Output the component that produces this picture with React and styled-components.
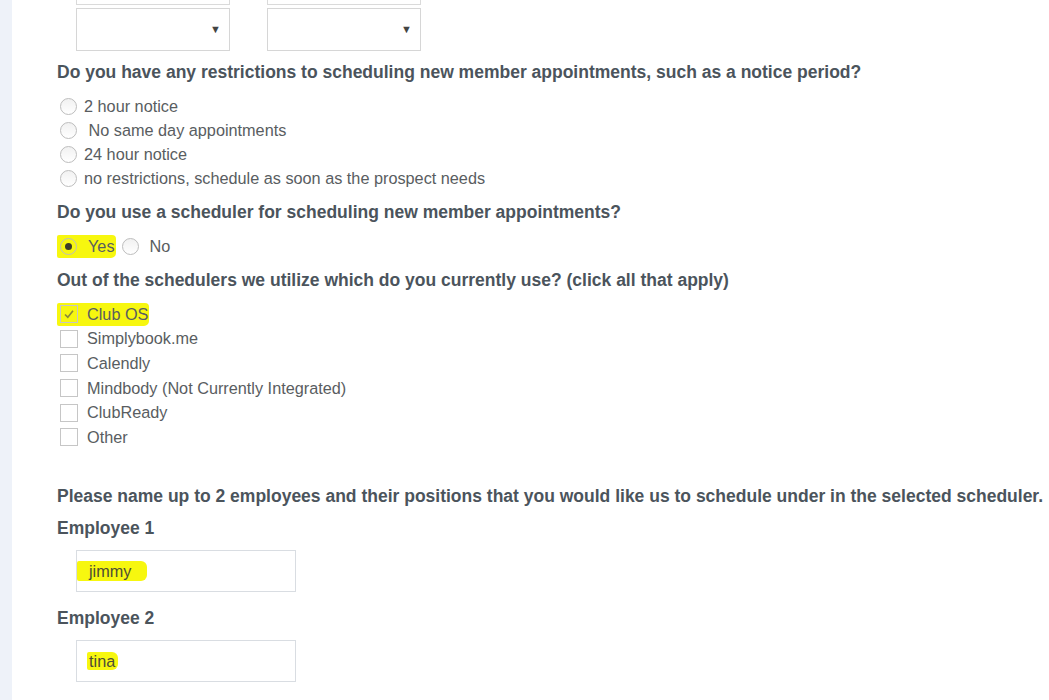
import React from "react";
import styled, { createGlobalStyle } from "styled-components";

const GlobalStyle = createGlobalStyle`
  html, body {
    margin: 0;
    padding: 0;
    background: #ffffff;
  }
  body {
    font-family: "Liberation Sans", Arial, sans-serif;
    overflow: hidden;
  }
`;

const restrictions = [
  "2 hour notice",
  "\u00a0No same day appointments",
  "24 hour notice",
  "no restrictions, schedule as soon as the prospect needs",
];

const schedulers = [
  { id: 1, name: "Club OS", checked: true },
  { id: 2, name: "Simplybook.me" },
  { id: 3, name: "Calendly" },
  { id: 4, name: "Mindbody (Not Currently Integrated)" },
  { id: 5, name: "ClubReady" },
  { id: 6, name: "Other" },
];

const employees = [
  { id: 1, label: "Employee 1", value: "jimmy", mark: "wide" },
  { id: 2, label: "Employee 2", value: "tina", mark: "tight" },
];

function Radio({ checked }) {
  return <RadioCircle checked={checked} />;
}

function CheckBox({ checked, flush }) {
  return (
    <Box flush={flush}>
      {checked && (
        <svg width="12" height="12" viewBox="0 0 12 12">
          <path d="M2 6.5 L4.8 9.2 L10 2.8" fill="none" stroke="#8a8a3a" strokeWidth="1.6" />
        </svg>
      )}
    </Box>
  );
}

export default function App() {
  return (
    <>
      <GlobalStyle />
      <Page>
        <SideStrip />
        <Content>
          <SelectRow cut>
            <PrevBox />
            <PrevBox />
          </SelectRow>
          <SelectRow>
            <Select>
              <Arrow>▼</Arrow>
            </Select>
            <Select>
              <Arrow>▼</Arrow>
            </Select>
          </SelectRow>

          <Question>
            Do you have any restrictions to scheduling new member appointments, such as a notice period?
          </Question>
          <OptionList>
            {restrictions.map((r) => (
              <RadioRow key={r}>
                <Radio />
                <OptionText>{r}</OptionText>
              </RadioRow>
            ))}
          </OptionList>

          <Question>Do you use a scheduler for scheduling new member appointments?</Question>
          <InlineRow>
            <Marker>
              <Radio checked />
              <OptionText gap={11}>Yes</OptionText>
            </Marker>
            <Radio />
            <OptionText gap={11}>No</OptionText>
          </InlineRow>

          <Question>Out of the schedulers we utilize which do you currently use? (click all that apply)</Question>
          <OptionList>
            {schedulers.map((s) =>
              s.checked ? (
                <CheckRow key={s.id}>
                  <Marker>
                    <CheckBox checked flush />
                    <OptionText gap={9}>{s.name}</OptionText>
                  </Marker>
                </CheckRow>
              ) : (
                <CheckRow key={s.id}>
                  <CheckBox />
                  <OptionText gap={9}>{s.name}</OptionText>
                </CheckRow>
              )
            )}
          </OptionList>

          <Question spaced>
            Please name up to 2 employees and their positions that you would like us to schedule under in the selected scheduler.
          </Question>
          {employees.map((e) => (
            <Field key={e.id}>
              <FieldLabel>{e.label}</FieldLabel>
              <TextBox>
                <InputMark variant={e.mark}>{e.value}</InputMark>
              </TextBox>
            </Field>
          ))}
        </Content>
      </Page>
    </>
  );
}

const Page = styled.div`
  display: flex;
  height: 700px;
  overflow: hidden;
`;

const SideStrip = styled.div`
  width: 12px;
  flex-shrink: 0;
  background: #eef2f9;
`;

const Content = styled.div`
  flex: 1;
  padding-left: 45px;
  display: flex;
  flex-direction: column;
  color: #555a5e;
`;

const SelectRow = styled.div`
  display: flex;
  gap: 37px;
  padding-left: 19px;
  margin-bottom: ${({ cut }) => (cut ? "3px" : "0")};
`;

const PrevBox = styled.div`
  width: 152px;
  height: 4px;
  border: 1px solid #dadada;
  border-top: none;
`;

const Select = styled.div`
  width: 154px;
  height: 43px;
  box-sizing: border-box;
  border: 1px solid #d6d6d6;
  display: flex;
  align-items: center;
  justify-content: flex-end;
  padding-right: 8px;
`;

const Arrow = styled.span`
  font-size: 11px;
  color: #444;
  line-height: 1;
`;

const Question = styled.h3`
  margin: ${({ spaced }) => (spaced ? "36px" : "12px")} 0 12px;
  font-size: 17.5px;
  line-height: 20px;
  font-weight: bold;
  color: #4b545c;
  white-space: nowrap;
  &:first-of-type {
    margin-top: 11px;
  }
`;

const FieldLabel = styled.div`
  font-size: 17.5px;
  line-height: 20px;
  font-weight: bold;
  color: #4b545c;
  margin-bottom: 12px;
`;

const OptionList = styled.div`
  display: flex;
  flex-direction: column;
`;

const RadioRow = styled.div`
  display: flex;
  align-items: center;
  height: 24px;
  padding-left: 3px;
`;

const CheckRow = styled.div`
  display: flex;
  align-items: center;
  height: 24.6px;
`;

const InlineRow = styled.div`
  display: flex;
  align-items: center;
  height: 24px;
`;

const Marker = styled.span`
  display: inline-flex;
  align-items: center;
  background: #f7f70f;
  padding: 2px 1px 2px 3px;
  border-radius: 2px 4px 5px 2px;
  margin-right: 6px;
`;

const RadioCircle = styled.span`
  display: inline-flex;
  align-items: center;
  justify-content: center;
  width: 17px;
  height: 17px;
  box-sizing: border-box;
  border-radius: 50%;
  border: 1px solid #bdbdbd;
  background: ${({ checked }) =>
    checked ? "transparent" : "linear-gradient(#f1f1f1, #ffffff)"};
  flex-shrink: 0;
  &::after {
    content: "";
    display: ${({ checked }) => (checked ? "block" : "none")};
    width: 7px;
    height: 7px;
    border-radius: 50%;
    background: #3c3c2a;
  }
`;

const Box = styled.span`
  display: inline-flex;
  align-items: center;
  justify-content: center;
  width: 18px;
  height: 18px;
  box-sizing: border-box;
  border: 1px solid #c6c6c6;
  flex-shrink: 0;
  margin-left: ${({ flush }) => (flush ? "0" : "3px")};
`;

const OptionText = styled.span`
  margin-left: ${({ gap }) => gap || 7}px;
  font-size: 16.25px;
  color: #595d61;
  white-space: pre;
`;

const Field = styled.div`
  display: flex;
  flex-direction: column;
  & + & {
    margin-top: 16px;
  }
`;

const TextBox = styled.div`
  margin-left: 19px;
  width: 220px;
  height: 42px;
  box-sizing: border-box;
  border: 1px solid #d9dde2;
  display: flex;
  align-items: center;
`;

const InputMark = styled.span`
  font-size: 16.25px;
  color: #4d4d35;
  background: #f7f70f;
  line-height: 18px;
  border-radius: 2px 6px 6px 2px;
  padding: ${({ variant }) => (variant === "wide" ? "1px 16px 1px 12px" : "0 3px 0 2px")};
  margin-left: ${({ variant }) => (variant === "wide" ? "0" : "10px")};
`;
